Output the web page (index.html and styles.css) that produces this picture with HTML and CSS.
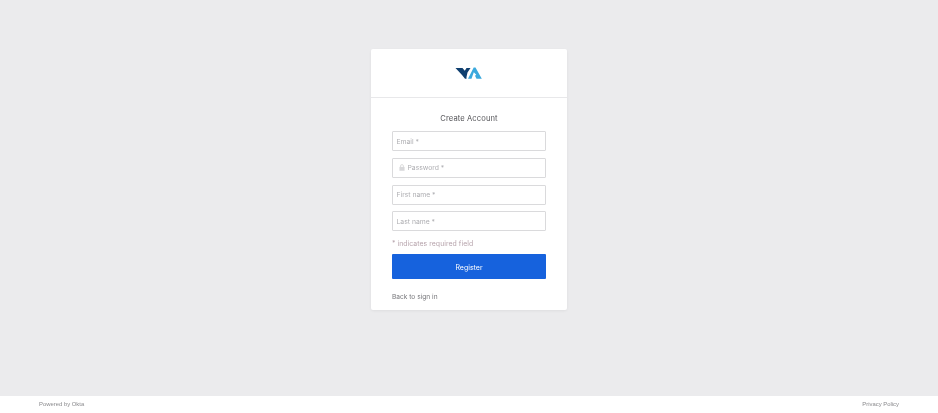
FILE: index.html
```html
<!DOCTYPE html>
<html lang="en">
<head>
<meta charset="utf-8">
<title>Create Account</title>
<link rel="stylesheet" href="styles.css">
</head>
<body>
<main class="stage">
  <section class="card">
    <header class="card-head">
      <svg class="logo" width="28" height="14" viewBox="0 0 28 14" aria-label="Logo">
        <path fill="#0f3f6f" d="M0.500 2H7.500L9.800 4.800L11.500 2H15.500L12.500 6.500L11.500 11V12.800H10L7 9Z"/>
        <path fill="#3ba9dd" d="M13 12.800L18.700 1.500H20.500L26.800 12.800H21.500L20 9.800L21.300 8.700L18.800 6.300L16.500 12.800Z"/>
      </svg>
    </header>
    <form class="form">
      <h1 class="title">Create Account</h1>
      <div class="fields">
        <div class="field">Email *</div>
        <div class="field"><svg class="lock" width="6" height="7" viewBox="0 0 7 8"><path fill="none" stroke="#d8d8da" d="M1.800 3.500V2.300a1.700 1.700 0 0 1 3.400 0v1.200"/><rect x="0.500" y="3.300" width="6" height="4.500" fill="#d8d8da"/></svg>Password *</div>
        <div class="field">First name *</div>
        <div class="field">Last name *</div>
      </div>
      <p class="hint">* indicates required field</p>
      <button class="register" type="button">Register</button>
      <a class="back" href="#">Back to sign in</a>
    </form>
  </section>
</main>
<footer class="foot">
  <span>Powered by Okta</span>
  <span>Privacy Policy</span>
</footer>
</body>
</html>
```
FILE: styles.css
```css
* { box-sizing: border-box; }
html, body { height: 100%; }
body {
  margin: 0;
  display: flex;
  flex-direction: column;
  background: #ebebed;
  font-family: "Inter", "Liberation Sans", sans-serif;
  overflow: hidden;
}
.stage {
  flex: 1;
  display: flex;
  justify-content: center;
  align-items: flex-start;
  padding-top: 49px;
}
.card {
  width: 196px;
  height: 261px;
  background: #fff;
  border-radius: 2px;
  box-shadow: 0 1px 3px rgba(0, 0, 0, 0.06);
  filter: blur(0.3px);
}
.card-head {
  height: 49px;
  display: flex;
  align-items: center;
  justify-content: center;
  border-bottom: 1px solid #e8e8ea;
}
.logo { display: block; }
.form {
  display: flex;
  flex-direction: column;
  padding: 14px 21px 0;
}
.title {
  margin: 0 0 7px;
  height: 12px;
  font-size: 7.600px;
  line-height: 14px;
  font-weight: 400;
  letter-spacing: 0.1px;
  color: #555559;
  text-align: center;
}
.fields {
  display: flex;
  flex-direction: column;
  gap: 6.800px;
}
.field {
  height: 20px;
  display: flex;
  align-items: center;
  gap: 3px;
  padding-left: 3.500px;
  border: 1px solid #dadadc;
  border-radius: 1px;
  font-size: 6.800px;
  color: #aeaeb2;
}
.lock { margin: 0 0 0 2px; }
.hint {
  margin: 6.800px 0 6px;
  height: 10px;
  font-size: 6.900px;
  line-height: 12px;
  letter-spacing: 0.05px;
  color: #b7a4ac;
}
.register {
  height: 25px;
  padding: 1px 0 0;
  border: 0;
  border-radius: 1px;
  background: #1662dd;
  color: #fff;
  font: 400 7px "Inter", "Liberation Sans", sans-serif;
}
.back {
  margin-top: 12px;
  font-size: 6.600px;
  line-height: 12px;
  color: #77777b;
  text-decoration: none;
}
.foot {
  flex: none;
  height: 17px;
  display: flex;
  align-items: center;
  justify-content: space-between;
  padding: 0 39px 1px;
  background: #fff;
  font: 5.900px "Liberation Sans", sans-serif;
  color: #8a8a8d;
  filter: blur(0.3px);
}
```
